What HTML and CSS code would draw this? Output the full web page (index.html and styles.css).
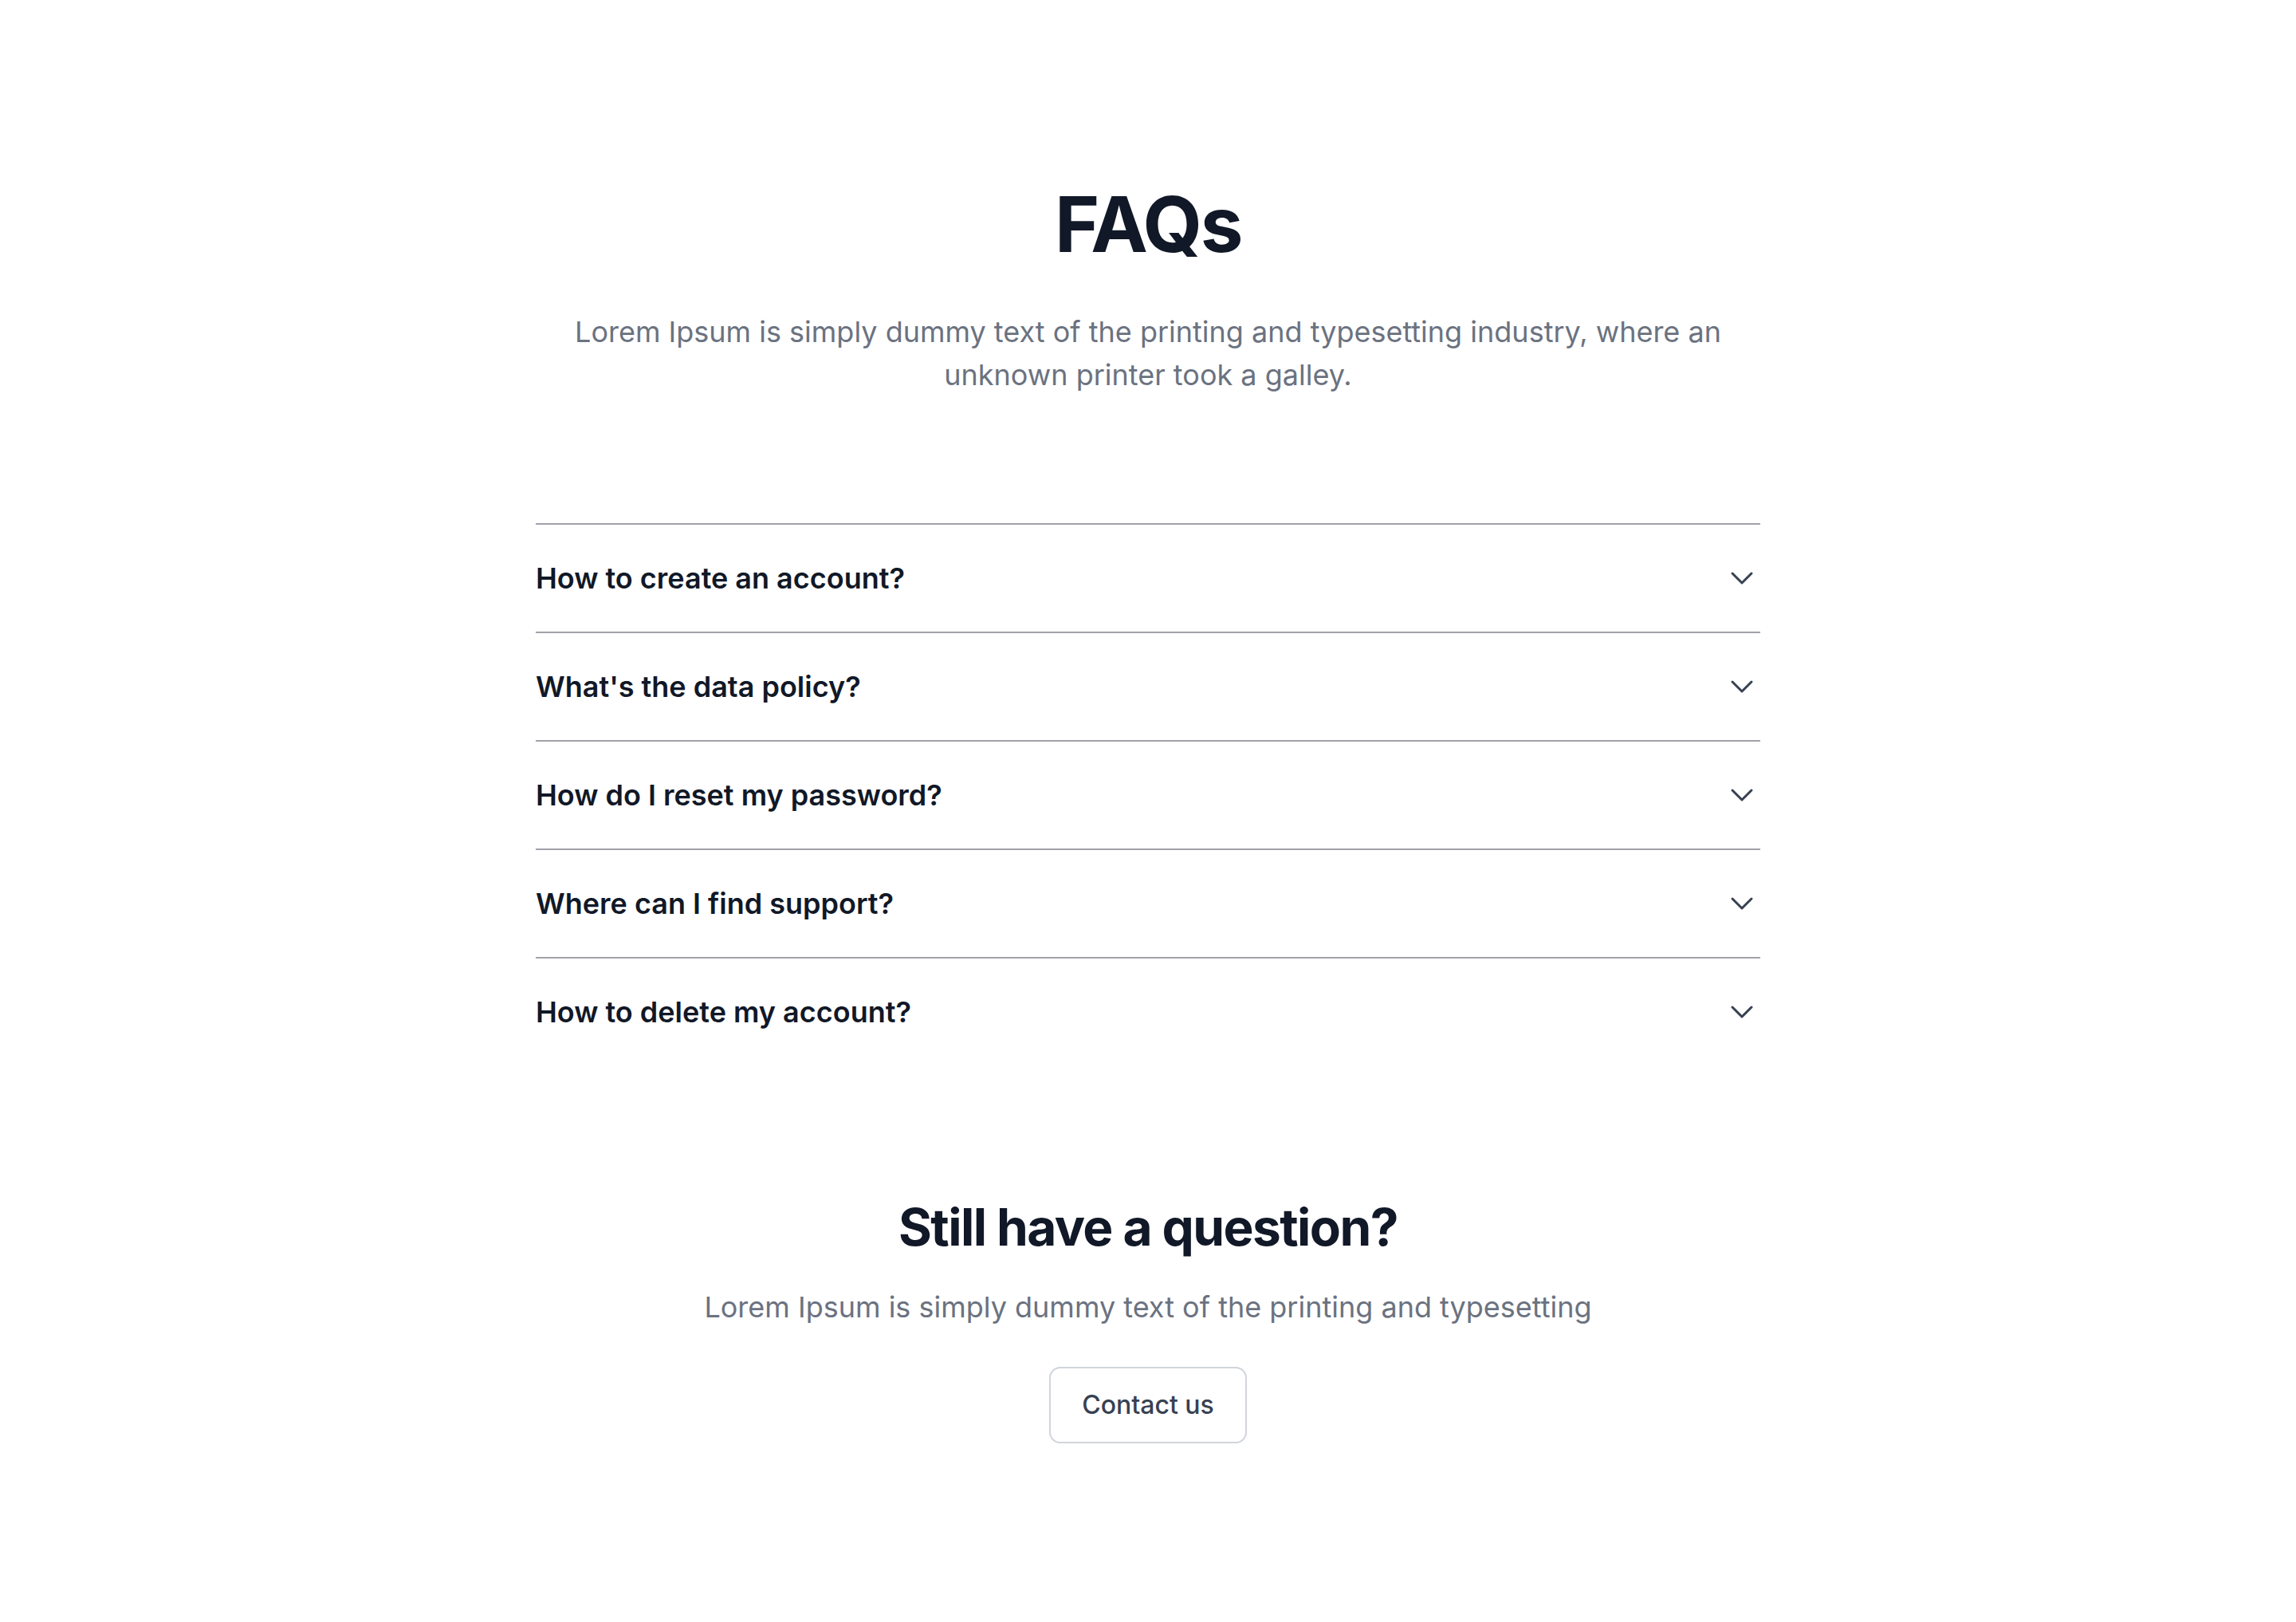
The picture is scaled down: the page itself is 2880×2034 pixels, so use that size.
FILE: index.html
```html
<!DOCTYPE html>
<html lang="en">
<head>
    <meta charset="UTF-8">
    <meta name="viewport" content="width=device-width, initial-scale=1.0">
    <title>FAQs</title>
    <link rel="stylesheet" href="styles.css">
</head>
<body>
    <section class="faq">
        <h1 class="faq-title">FAQs</h1>
        <p class="faq-lead">Lorem Ipsum is simply dummy text of the printing and typesetting industry, where an unknown printer took a galley.</p>

        <div class="accordion">
            <div class="item">
                <span class="question">How to create an account?</span>
                <svg class="chevron" viewBox="0 0 24 24"><path d="m6 9 6 6 6-6"/></svg>
            </div>
            <div class="item">
                <span class="question">What's the data policy?</span>
                <svg class="chevron" viewBox="0 0 24 24"><path d="m6 9 6 6 6-6"/></svg>
            </div>
            <div class="item">
                <span class="question">How do I reset my password?</span>
                <svg class="chevron" viewBox="0 0 24 24"><path d="m6 9 6 6 6-6"/></svg>
            </div>
            <div class="item">
                <span class="question">Where can I find support?</span>
                <svg class="chevron" viewBox="0 0 24 24"><path d="m6 9 6 6 6-6"/></svg>
            </div>
            <div class="item">
                <span class="question">How to delete my account?</span>
                <svg class="chevron" viewBox="0 0 24 24"><path d="m6 9 6 6 6-6"/></svg>
            </div>
        </div>

        <div class="contact">
            <h2>Still have a question?</h2>
            <p>Lorem Ipsum is simply dummy text of the printing and typesetting</p>
            <button type="button">Contact us</button>
        </div>
    </section>
</body>
</html>
```

FILE: styles.css
```css
body {
    margin: 0;
    font-family: Inter, "Noto Sans", sans-serif;
    background: #fff;
    color: #111827;
}

.faq {
    width: 1536px;
    margin: 0 auto;
    padding: 233px 0 200px;
    text-align: center;
}

.faq-title {
    margin: 0;
    font-size: 96px;
    line-height: 96px;
    font-weight: 700;
    letter-spacing: -2.4px;
    color: #111827;
}

.faq-lead {
    margin: 60px 0 0;
    font-size: 36px;
    line-height: 54px;
    color: #6b7280;
}

.accordion {
    margin-top: 159px;
    text-align: left;
}

.item {
    display: flex;
    align-items: center;
    justify-content: space-between;
    height: 134px;
    border-top: 2px solid #a1a1aa;
}

.question {
    font-size: 36px;
    line-height: 48px;
    font-weight: 600;
    color: #111827;
}

.chevron {
    width: 48px;
    height: 48px;
    margin-right: -1px;
    fill: none;
    stroke: #374151;
    stroke-width: 1.5;
    stroke-linecap: round;
    stroke-linejoin: round;
}

.contact {
    margin-top: 163px;
}

.contact h2 {
    margin: 0;
    font-size: 64px;
    line-height: 80px;
    font-weight: 700;
    letter-spacing: -1.6px;
    color: #111827;
}

.contact p {
    margin: 32px 0 0;
    font-size: 36px;
    line-height: 56px;
    color: #6b7280;
}

.contact button {
    margin-top: 47px;
    padding: 22px 39px;
    border: 2px solid #d1d5db;
    border-radius: 14px;
    background: #fff;
    font-family: inherit;
    font-size: 32px;
    line-height: 48px;
    font-weight: 500;
    color: #374151;
}
```
